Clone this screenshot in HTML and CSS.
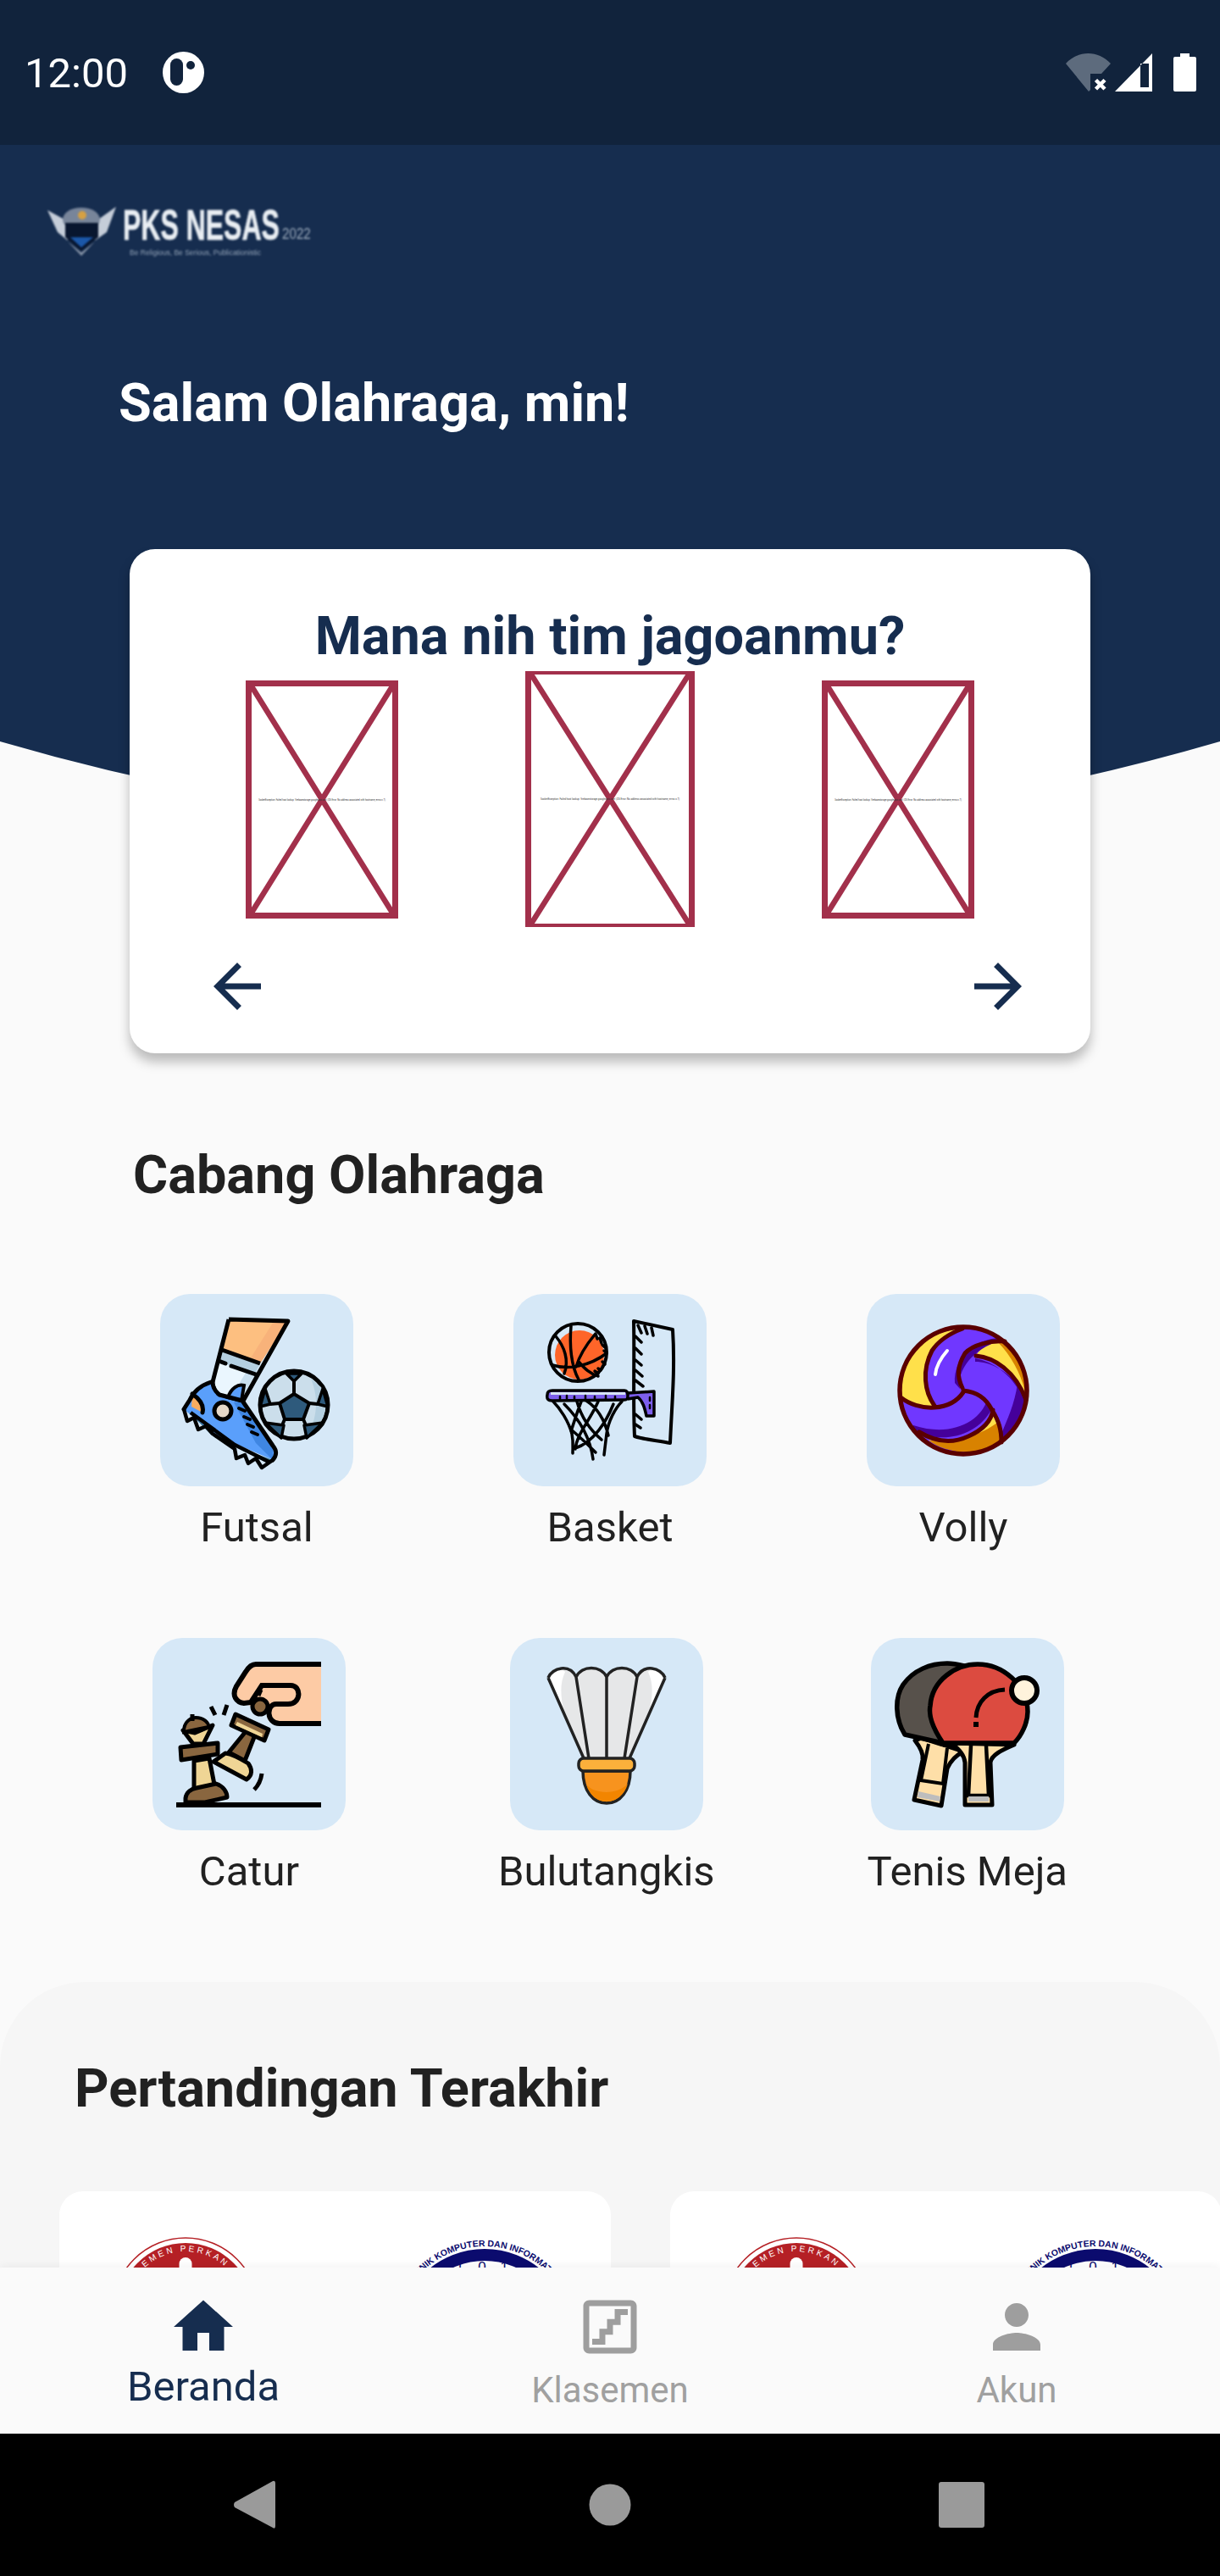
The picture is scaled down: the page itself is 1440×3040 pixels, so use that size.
FILE: index.html
```html
<!DOCTYPE html>
<html lang="id">
<head>
<meta charset="utf-8">
<title>PKS NESAS</title>
<link rel="stylesheet" href="styles.css">
</head>
<body>
<div class="phone">
  <header class="status">
    <span class="clock">12:00</span>
    <svg class="status-dot" viewBox="0 0 49 49"><circle cx="24.5" cy="24.5" r="24.5" fill="#fff"/><rect x="9" y="8" width="15" height="32" rx="7.5" fill="#11233c"/><circle cx="33" cy="16" r="5" fill="#11233c"/></svg>
    <span class="status-spacer"></span>
    <svg class="st-wifi" viewBox="0 0 53 45"><path d="M0 12C15-4 38-4 53 12L42 24H29V43L27 45Z" fill="#5d6b7d"/><path d="M35.500 31.500L46 42M46 31.500L35.500 42" stroke="#fff" stroke-width="4.500"/></svg>
    <svg class="st-signal" viewBox="0 0 44 45"><path fill-rule="evenodd" d="M0 45L44 0V45ZM30 12V40H40V12Z" fill="#fff"/></svg>
    <svg class="st-batt" viewBox="0 0 27 45"><path d="M8 0H19V4H25Q27 4 27 6V43Q27 45 25 45H2Q0 45 0 43V6Q0 4 2 4H8Z" fill="#fff"/></svg>
  </header>

  <main class="scroll">
    <svg class="backdrop" viewBox="0 0 1440 960" preserveAspectRatio="none"><path d="M0 0H1440V704Q720 914 0 704Z" fill="#162d4f"/></svg>
    <div class="flow">
      <svg class="logo" viewBox="0 0 320 64">
        <path d="M0 6L20 17L24 42L12 32Z" fill="#c5cdd9"/>
        <path d="M81 2L60 17L56 42L70 32Z" fill="#c5cdd9"/>
        <ellipse cx="40" cy="17" rx="22" ry="14" fill="#78859a"/>
        <circle cx="41" cy="12" r="5" fill="#d5a043"/>
        <path d="M21 21H60V38L40 54L21 38Z" fill="#08162f"/>
        <path d="M27 38H54L40 50Z" fill="#1b57a8"/>
        <path d="M24 43L40 56L56 43L40 60Z" fill="#8592a6"/>
        <text class="logo-main" transform="translate(89 41) scale(.64 1)">PKS NESAS</text>
        <text class="logo-year" transform="translate(277 40) scale(.8 1)">2022</text>
        <text class="logo-tag" x="97" y="59">Be Religious, Be Serious, Publicationistic</text>
      </svg>
      <h1 class="greet">Salam Olahraga, min!</h1>

      <section class="pick">
        <h2 class="pick-title">Mana nih tim jagoanmu?</h2>
        <div class="carousel">
          <div class="ph">
            <svg class="ph-svg" viewBox="0 0 166 267" preserveAspectRatio="none"><path class="ph-x" d="M0 0L166 267M166 0L0 267"/><text class="ph-text" x="83" y="135" text-anchor="middle">SocketException: Failed host lookup: 'firebasestorage.googleapis.com' (OS Error: No address associated with hostname, errno = 7)</text></svg>
          </div>
          <div class="ph ph-main">
            <svg class="ph-svg" viewBox="0 0 186 294" preserveAspectRatio="none"><path class="ph-x" d="M0 0L186 294M186 0L0 294"/><text class="ph-text ph-text-main" x="93" y="148" text-anchor="middle">SocketException: Failed host lookup: 'firebasestorage.googleapis.com' (OS Error: No address associated with hostname, errno = 7)</text></svg>
          </div>
          <div class="ph">
            <svg class="ph-svg" viewBox="0 0 166 267" preserveAspectRatio="none"><path class="ph-x" d="M0 0L166 267M166 0L0 267"/><text class="ph-text" x="83" y="135" text-anchor="middle">SocketException: Failed host lookup: 'firebasestorage.googleapis.com' (OS Error: No address associated with hostname, errno = 7)</text></svg>
          </div>
        </div>
        <div class="arrows">
          <svg class="icon84" viewBox="0 0 24 24"><path fill="#162d4f" d="M20 11H7.830l5.590-5.590L12 4l-8 8 8 8 1.410-1.410L7.830 13H20v-2z"/></svg>
          <svg class="icon84" viewBox="0 0 24 24"><path fill="#162d4f" d="M12 4l-1.410 1.410L16.170 11H4v2h12.170l-5.580 5.590L12 20l8-8z"/></svg>
        </div>
      </section>

      <h2 class="section-title">Cabang Olahraga</h2>

      <div class="sports">
        <div class="sport">
          <div class="tile">
            <svg class="tile-art" viewBox="0 0 228 227">
              <path d="M81 30L151 32L118 82L73 66Z" fill="#fdbf80"/><path d="M135 31L151 32L118 82L106 77Z" fill="#f8b27a"/>
              <path d="M73 66L118 82L112 94L69 80Z" fill="#b4cfe0"/>
              <path d="M69 80L112 94L95 128L72 122L62 108Z" fill="#eaf6fe"/><path d="M103 90L112 94L95 128L82 124Z" fill="#c9dfee"/>
              <path d="M81 30L151 32L97 128M81 30L62 104M73 66L118 82" fill="none" stroke="#000" stroke-width="5" stroke-linejoin="round"/>
              <path d="M69 79L77 82M84 85L113 95" stroke="#000" stroke-width="5" stroke-linecap="round"/>
              <path d="M60 104C48 108 40 114 35 125L28 136L62 165L133 196C138 190 138 185 133 179L97 126C90 122 78 122 70 119C64 114 62 110 60 104Z" fill="#5a9ffb"/>
              <path d="M87 128L97 126L133 179L133 196L113 176Z" fill="#3f86e2"/>
              <path d="M38 118L50 130V140L37 133Z" fill="#f6ab60"/>
              <path d="M32 137L62 165L100 184L133 196L128 200L60 166Z" fill="#35708f"/>
              <path d="M80 122C84 111 92 106 99 108L96 126Z" fill="#5a9ffb" stroke="#000" stroke-width="4"/>
              <path d="M60 104C48 108 40 114 35 125L28 136M97 126L133 179C138 185 138 190 133 196M62 104C62 110 64 114 70 119L97 126M38 118C48 125 52 132 50 140" fill="none" stroke="#000" stroke-width="5" stroke-linejoin="round" stroke-linecap="round"/>
              <path d="M28 136L32 150L40 146L45 160L54 156L62 165L88 183L90 194L100 190L104 200L113 194L120 205L133 196M36 140L88 178L128 198" fill="none" stroke="#000" stroke-width="4.500" stroke-linejoin="round"/>
              <circle cx="74" cy="138" r="10" fill="#e6d8c8" stroke="#000" stroke-width="5"/>
              <path d="M93 135L100 138M99 145L106 148M103 154L110 157M108 163L115 166" stroke="#000" stroke-width="4" stroke-linecap="round"/>
              <circle cx="158" cy="131" r="40" fill="#cbdeeb" stroke="#000" stroke-width="5"/>
              <path d="M190 110A40 40 0 0 1 190 150C186 160 180 166 174 169C185 145 188 125 178 100Z" fill="#b4cfe0"/>
              <path d="M158 118L176 129L169 148H147L141 129Z" fill="#2e5a7c" stroke="#000" stroke-width="4" stroke-linejoin="round"/>
              <path d="M149 94L167 94L158 103ZM192 112L198 133L186 130ZM124 112L118 133L130 130ZM124 152L143 170L146 155ZM192 152L173 170L170 155Z" fill="#2e5a7c" stroke="#000" stroke-width="3.500" stroke-linejoin="round"/>
              <path d="M158 103V118M176 129L186 130M141 129L130 130M147 148L144 155M169 148L172 155" stroke="#000" stroke-width="4"/>
            </svg>
          </div>
          <span class="sport-name">Futsal</span>
        </div>
        <div class="sport">
          <div class="tile">
            <svg class="tile-art" viewBox="0 0 228 227">
              <circle cx="78" cy="72" r="29" fill="#ff6529"/>
              <circle cx="76" cy="69" r="34" fill="none" stroke="#000" stroke-width="4"/>
              <path d="M68 38C66 60 68 85 77 101M50 50C60 62 66 78 60 94M96 48C86 60 78 72 74 86M46 84C65 90 90 85 110 70M77 80C84 88 90 94 100 97" fill="none" stroke="#000" stroke-width="3.500" stroke-linecap="round"/>
              <path d="M97 47L99 53M102 52L104 58M105 60L108 63M107 67L110 70M105 80L108 83M100 88L103 90M96 91L100 94" stroke="#000" stroke-width="3.500" stroke-linecap="round"/>
              <path d="M142 32L188 42C191 90 187 130 185 176C170 173 155 172 143 168C141 130 143 80 142 32Z" fill="none" stroke="#000" stroke-width="4" stroke-linejoin="round"/>
              <path d="M147 37L151 46M155 38L158 47M163 40L165 49M144 50L151 57M144 64L151 71M144 78L151 84M144 90L152 97M144 102L153 109M144 142L151 148M144 154L150 158" stroke="#000" stroke-width="3.500" stroke-linecap="round"/>
              <path d="M40 120C40 115 42 114 46 114H135V116L167 115L166 130C165 140 166 144 166 144H157C155 135 153 127 147 122L135 124L46 126C41 126 40 124 40 120Z" fill="#7d5fec"/>
              <path d="M44 116H132V119H44Z" fill="#d7e4f4"/>
              <path d="M46 114L131 114C134 114 135 116 135 120C135 124 134 125 131 125L46 126C41 126 39 124 40 119C40 115 42 114 46 114ZM135 117L166 115L166 130L166 144H157C155 135 153 127 147 122L135 124" fill="none" stroke="#000" stroke-width="3.500" stroke-linejoin="round"/>
              <path d="M55 124V121M63 124V120M72 124V121M85 124V120M96 124V121M109 124V120M120 124V121M161 122V126M161 131V135" stroke="#000" stroke-width="2.500" stroke-linecap="round"/>
              <path d="M47 127C55 135 65 150 69 165C71 175 70 180 70 188M128 127C120 135 112 150 110 165L107 190M75 127C80 145 90 160 104 172M100 127C90 150 75 165 73 183M60 130C75 145 90 165 94 195M118 130C110 150 95 175 73 182M86 126C100 135 108 150 112 167M80 127C75 140 72 150 68 162M68 160C80 170 90 180 97 187" fill="none" stroke="#000" stroke-width="3.500" stroke-linecap="round"/>
            </svg>
          </div>
          <span class="sport-name">Basket</span>
        </div>
        <div class="sport">
          <div class="tile">
            <svg class="tile-art" viewBox="0 0 228 227">
              <circle cx="114" cy="114" r="75" fill="#7037ff"/>
              <path d="M113 41C85 50 68 78 68 103C68 115 74 125 80 132C65 135 50 130 40 122A75 75 0 0 1 113 41Z" fill="#ffe04a"/>
              <path d="M149 137C147 150 138 160 120 168C105 175 85 175 73 172A75 75 0 0 0 159 173C159 160 157 148 149 137Z" fill="#ffe04a"/>
              <path d="M73 173C105 176 140 165 156 150C159 160 159 168 159 173A75 75 0 0 1 73 173Z" fill="#d88200"/>
              <path d="M129 73C150 76 175 90 188 123A75 75 0 0 0 161 55C145 57 133 64 129 73Z" fill="#ffe04a"/>
              <path d="M155 57C170 72 182 95 186 112L188 123A75 75 0 0 0 161 55Z" fill="#d88200"/>
              <path d="M178 105C175 130 165 150 159 165V175C175 163 188 142 189 125Z" fill="#45009a"/>
              <path d="M158 52C130 52 102 75 104 105L110 112C106 90 125 65 158 55Z" fill="#45009a"/>
              <path d="M55 160C85 178 130 170 148 135L142 125C135 150 100 170 55 155Z" fill="#45009a"/>
              <path d="M128 76C150 80 170 95 182 118L178 107C165 90 145 80 128 80Z" fill="#45009a"/>
              <circle cx="114" cy="114" r="75" fill="none" stroke="#5a0000" stroke-width="5.500"/>
              <path d="M113 111C106 97 107 85 116 70C125 60 145 55 163 56M129 73C150 75 175 90 188 125M114 114C130 116 140 122 148 137C156 150 159 160 159 175M149 137C147 150 138 160 120 168C105 175 85 177 62 163M114 116C106 128 95 133 80 134C65 135 50 130 40 122M80 132C68 115 65 90 77 67C85 55 97 47 113 41" fill="none" stroke="#5a0000" stroke-width="5" stroke-linecap="round"/>
              <path d="M95 67C88 75 82 85 81 95" fill="none" stroke="#fff" stroke-width="4" stroke-linecap="round"/>
            </svg>
          </div>
          <span class="sport-name">Volly</span>
        </div>
      </div>

      <div class="sports sports-second">
        <div class="sport">
          <div class="tile">
            <svg class="tile-art" viewBox="0 0 228 227">
              <path d="M199 31H122C117 31 113 35 110 40L99 57C93 68 99 76 108 77L135 88C135 100 140 101 150 101H199Z" fill="#fdcba5"/>
              <path d="M199 31H122C117 31 113 35 110 40L99 57C93 68 99 76 108 77L116 76L129 56H163C176 56 176 78 160 78H146C134 78 134 101 150 101H199" fill="none" stroke="#000" stroke-width="6"/>
              <path d="M125 68L128 61" stroke="#000" stroke-width="5"/>
              <circle cx="127" cy="81" r="9" fill="#89663f" stroke="#000" stroke-width="5"/>
              <path d="M112 108L122 112L109 145L90 135Z" fill="#89663f" stroke="#000" stroke-width="5" stroke-linejoin="round"/>
              <path d="M98 90L137 108L132 121L93 103Z" fill="#89663f" stroke="#000" stroke-width="5" stroke-linejoin="round"/>
              <path d="M100 99L130 113L129 117L98 103Z" fill="#efd595"/>
              <path d="M72 146L86 136C95 137 105 143 113 148C118 155 118 162 111 167Z" fill="#efd595" stroke="#000" stroke-width="5" stroke-linejoin="round"/>
              <path d="M49 145L67 142L74 178L49 178Z" fill="#efd595" stroke="#000" stroke-width="5" stroke-linejoin="round"/>
              <path d="M33 129L77 124L77 137L34 144Z" fill="#89663f" stroke="#000" stroke-width="5" stroke-linejoin="round"/>
              <path d="M36 109L50 112L71 103L60 125H48Z" fill="#efd595" stroke="#000" stroke-width="5" stroke-linejoin="round"/>
              <path d="M37 108C38 98 46 94 51 94C60 94 67 100 66 105L37 111Z" fill="#89663f" stroke="#000" stroke-width="4"/>
              <path d="M47 90V98" stroke="#000" stroke-width="5"/>
              <path d="M39 194V189C40 182 46 178 52 177L75 172C84 175 88 182 88 188L62 194Z" fill="#89663f" stroke="#000" stroke-width="5" stroke-linejoin="round"/>
              <path d="M28 197H199" stroke="#000" stroke-width="6"/>
              <path d="M69 81L74 91M88 79L84 91" stroke="#000" stroke-width="5"/>
              <path d="M129 160C128 168 125 174 120 179" fill="none" stroke="#000" stroke-width="5"/>
            </svg>
          </div>
          <span class="sport-name">Catur</span>
        </div>
        <div class="sport">
          <div class="tile">
            <svg class="tile-art" viewBox="0 0 228 227">
              <path d="M45 47C50 35 70 30 78 46C85 32 107 32 114 46C121 32 143 32 150 46C158 30 178 35 183 47L141 142H87Z" fill="#e6e7e8"/>
              <path d="M45 47C50 38 60 35 65 40C58 55 60 70 64 90L87 142Z" fill="#fff"/>
              <path d="M183 47C178 38 168 35 163 40C170 55 168 70 164 90L141 142Z" fill="#fff"/>
              <path d="M45 47C50 35 70 30 78 46C85 32 107 32 114 46C121 32 143 32 150 46C158 30 178 35 183 47M45 47L87 142M183 47L141 142M78 46L93 142M150 46L135 142M114 46V142" fill="none" stroke="#222" stroke-width="3.500" stroke-linejoin="round"/>
              <path d="M86 157H142C142 180 130 195 114 195C98 195 86 180 86 157Z" fill="#f7931e" stroke="#222" stroke-width="3.500"/>
              <path d="M90 173C100 185 128 185 139 172C135 186 125 193 114 193C103 193 94 186 90 173Z" fill="#f28500"/>
              <rect x="81" y="142" width="66" height="15" rx="6" fill="#fbb03b" stroke="#222" stroke-width="3.500"/>
            </svg>
          </div>
          <span class="sport-name">Bulutangkis</span>
        </div>
        <div class="sport">
          <div class="tile">
            <svg class="tile-art" viewBox="0 0 228 227">
              <path d="M52 121C59 130 62 138 61 144L51 191L83 198L90 154C94 145 101 138 110 134L60 118Z" fill="#fedfa8" stroke="#000" stroke-width="5" stroke-linejoin="round"/>
              <path d="M68 125L59 168L85 172L90 130" fill="#fedfa8" stroke="#000" stroke-width="4"/>
              <path d="M56 181L82 187L81 193L55 188Z" fill="#bdbdbd"/>
              <path d="M40 114C28 95 28 70 38 55C50 38 70 30 90 30C100 30 106 32 115 34L85 124Z" fill="#57514b" stroke="#000" stroke-width="5.500" stroke-linejoin="round"/>
              <path d="M94 124C103 130 110 137 111 147V197H143L141 147C142 138 155 132 169 126Z" fill="#fedfa8" stroke="#000" stroke-width="5" stroke-linejoin="round"/>
              <path d="M118 127L115 186H139L136 127" fill="none" stroke="#000" stroke-width="4.500"/>
              <rect x="115" y="187" width="24" height="6" fill="#bdbdbd"/>
              <path d="M85 124C72 105 68 90 70 80C72 50 100 31 126 31C155 31 185 55 185 87C185 100 178 115 169 124Z" fill="#dc4b40" stroke="#000" stroke-width="5.500" stroke-linejoin="round"/>
              <path d="M158 61C138 62 125 75 124 94" fill="none" stroke="#000" stroke-width="5"/>
              <rect x="121" y="99" width="6" height="6"/>
              <circle cx="181" cy="62" r="15" fill="#fff3dc" stroke="#000" stroke-width="6"/>
            </svg>
          </div>
          <span class="sport-name">Tenis Meja</span>
        </div>
      </div>

      <section class="matches">
        <h2 class="matches-title">Pertandingan Terakhir</h2>
        <div class="match-row">
          <article class="match">
            <svg class="crest" viewBox="0 0 190 190"><circle cx="95" cy="87" r="86" fill="#fff" stroke="#b52025" stroke-width="1.500"/><circle cx="95" cy="87" r="80" fill="#b52025"/><path id="arcA" d="M25 87A70 70 0 0 1 165 87" fill="none"/><text class="crest-red"><textPath href="#arcA" startOffset="50%" text-anchor="middle">EMEN PERKAN</textPath></text><rect x="87.500" y="24" width="15" height="40" rx="7.500" fill="#fff"/></svg>
            <svg class="crest" viewBox="0 0 190 190"><circle cx="95" cy="117" r="96" fill="#fff" stroke="#0b0b6e" stroke-width="14"/><path id="arcB" d="M-11 117A106 106 0 0 1 201 117" fill="none"/><text class="crest-blue"><textPath href="#arcB" startOffset="50%" text-anchor="middle">TEKNIK KOMPUTER DAN INFORMATIKA</textPath></text><text class="crest-num" x="95" y="41" text-anchor="middle">1 0 1</text></svg>
          </article>
          <article class="match">
            <svg class="crest" viewBox="0 0 190 190"><circle cx="95" cy="87" r="86" fill="#fff" stroke="#b52025" stroke-width="1.500"/><circle cx="95" cy="87" r="80" fill="#b52025"/><path id="arcC" d="M25 87A70 70 0 0 1 165 87" fill="none"/><text class="crest-red"><textPath href="#arcC" startOffset="50%" text-anchor="middle">EMEN PERKAN</textPath></text><rect x="87.500" y="24" width="15" height="40" rx="7.500" fill="#fff"/></svg>
            <svg class="crest" viewBox="0 0 190 190"><circle cx="95" cy="117" r="96" fill="#fff" stroke="#0b0b6e" stroke-width="14"/><path id="arcD" d="M-11 117A106 106 0 0 1 201 117" fill="none"/><text class="crest-blue"><textPath href="#arcD" startOffset="50%" text-anchor="middle">TEKNIK KOMPUTER DAN INFORMATIKA</textPath></text><text class="crest-num" x="95" y="41" text-anchor="middle">1 0 1</text></svg>
          </article>
        </div>
      </section>
    </div>
  </main>

  <nav class="tabs">
    <div class="tab tab-on">
      <svg class="icon84" viewBox="0 0 24 24"><path d="M10 20v-6h4v6h5v-8h3L12 3 2 12h3v8z"/></svg>
      <span class="tab-label">Beranda</span>
    </div>
    <div class="tab">
      <svg class="icon84" viewBox="0 0 24 24"><path d="M19 3H5c-1.100 0-2 .9-2 2v14c0 1.100.9 2 2 2h14c1.100 0 2-.9 2-2V5c0-1.100-.9-2-2-2zm0 16H5V5h14v14z"/><path d="M18 6h-4.420v3.330H11v3.330H8.420V16H6v2h4.420v-3.330H13v-3.330h2.580V8H18z"/></svg>
      <span class="tab-label">Klasemen</span>
    </div>
    <div class="tab">
      <svg class="icon84" viewBox="0 0 24 24"><path d="M12 12c2.210 0 4-1.790 4-4s-1.790-4-4-4-4 1.790-4 4 1.790 4 4 4zm0 2c-2.670 0-8 1.340-8 4v2h16v-2c0-2.660-5.330-4-8-4z"/></svg>
      <span class="tab-label">Akun</span>
    </div>
  </nav>

  <footer class="sysnav">
    <svg class="sys-btn" viewBox="0 0 56 58"><path d="M47 1Q50 0 50 4V54Q50 58 47 56L2 32Q0 29 2 26Z" fill="#9a9a9a"/></svg>
    <svg class="sys-btn" viewBox="0 0 56 58"><circle cx="28" cy="29" r="24.500" fill="#9a9a9a"/></svg>
    <svg class="sys-btn" viewBox="0 0 56 58"><rect x="0" y="2" width="54" height="54" rx="3" fill="#9a9a9a"/></svg>
  </footer>
</div>
</body>
</html>
```

FILE: styles.css
```css
* { box-sizing: border-box; }
html, body { margin: 0; padding: 0; }
body { font-family: Roboto, "Liberation Sans", sans-serif; background: #fafafa; }
h1, h2 { margin: 0; font-weight: 700; font-size: 63px; line-height: 74px; }

.phone { width: 1440px; height: 3040px; display: flex; flex-direction: column; overflow: hidden; background: #fafafa; }

/* status bar */
.status { flex: 0 0 171px; display: flex; align-items: center; padding: 3px 28px 0 29px; background: #11233c; color: #fff; }
.clock { font-size: 49px; line-height: 58px; }
.status-dot { width: 49px; height: 49px; margin-left: 41px; margin-top: -4px; }
.status-spacer { flex: 1; }
.st-wifi { width: 53px; height: 45px; margin-top: -3px; }
.st-signal { width: 44px; height: 45px; margin-left: 5px; margin-top: -3px; }
.st-batt { width: 27px; height: 45px; margin-left: 25px; margin-top: -3px; }

/* scrolling area */
.scroll { flex: 1; min-height: 0; position: relative; overflow: hidden; }
.backdrop { position: absolute; left: 0; top: 0; width: 1440px; height: 960px; }
.flow { position: relative; display: flex; flex-direction: column; }

.logo { width: 320px; height: 64px; margin: 71px 0 0 56px; filter: blur(0.8px); flex: none; }
.logo-main { font: 700 50px "Liberation Sans", sans-serif; fill: #e9eef3; stroke: #e9eef3; stroke-width: 0.6px; }
.logo-year { font: 400 19px "Liberation Sans", sans-serif; fill: #9aa8ba; }
.logo-tag { font: 400 8.500px "Liberation Sans", sans-serif; fill: #94a4b8; }

.greet { margin: 133px 0 0 140px; color: #fff; }

/* team picker card */
.pick { margin: 135px 153px 0; height: 595px; padding-top: 66px; background: #fff; border-radius: 30px; box-shadow: 0 10px 14px rgba(0, 0, 0, 0.26); display: flex; flex-direction: column; flex: none; }
.pick-title { text-align: center; color: #162d4f; }
.carousel { margin-top: 4px; display: flex; justify-content: center; align-items: center; gap: 150px; }
.ph { width: 180px; height: 281px; border: 7px solid #a2304b; }
.ph-main { width: 200px; height: 302px; border-width: 4px 7px; }
.ph-svg { display: block; width: 100%; height: 100%; }
.ph-x { fill: none; stroke: #a2304b; stroke-width: 6.500; }
.ph-text { font-family: Roboto, sans-serif; font-size: 2.600px; fill: #333; }
.ph-text-main { font-size: 2.850px; }
.arrows { margin-top: 28px; padding: 0 67px 0 85px; display: flex; justify-content: space-between; }
.icon84 { width: 84px; height: 84px; display: block; flex: none; }

.section-title { margin: 107px 0 0 157px; color: #212121; }

/* sports grid */
.sports { margin-top: 103px; display: flex; justify-content: space-evenly; }
.sports-second { margin-top: 101px; }
.sport { min-width: 228px; display: flex; flex-direction: column; align-items: center; gap: 20px; }
.tile { width: 228px; height: 227px; border-radius: 35px; background: #d6e8f7; }
.tile-art { display: block; width: 228px; height: 227px; }
.sport-name { font-size: 49px; line-height: 58px; color: #212121; white-space: nowrap; }

/* last matches */
.matches { margin-top: 101px; padding: 89px 0 0 70px; background: #f6f6f6; border-radius: 100px 100px 0 0; }
.matches-title { margin-left: 18px; color: #212121; }
.match-row { margin-top: 84px; display: flex; gap: 70px; width: 1500px; }
.match { width: 651px; height: 320px; padding: 54px; display: flex; justify-content: space-between; background: #fff; border-radius: 28px; }
.crest { width: 190px; height: 190px; flex: none; }
.crest-red { font: 400 10px "Liberation Sans", sans-serif; letter-spacing: 3px; fill: #fff; }
.crest-blue { font: 700 10.500px "Liberation Sans", sans-serif; fill: #0b0b6e; }
.crest-num { font: 400 17px "Liberation Sans", sans-serif; letter-spacing: 6px; fill: #0b0b6e; }

/* tab bar */
.tabs { flex: 0 0 196px; position: relative; display: flex; padding-top: 28px; background: #fafafa; box-shadow: 0 -2px 10px rgba(0, 0, 0, 0.05); }
.tab { flex: 1; display: flex; flex-direction: column; align-items: center; color: #a0a0a0; fill: #9e9e9e; }
.tab-label { font-size: 42px; line-height: 50px; margin-top: 8px; }
.tab-on { color: #162d4f; fill: #162d4f; }
.tab-on .tab-label { font-size: 49px; line-height: 58px; margin-top: 0; }

/* system navigation */
.sysnav { flex: 0 0 168px; display: flex; align-items: center; justify-content: space-between; padding: 0 276px 0 275px; background: #000; }
.sys-btn { width: 56px; height: 58px; flex: none; }
```
